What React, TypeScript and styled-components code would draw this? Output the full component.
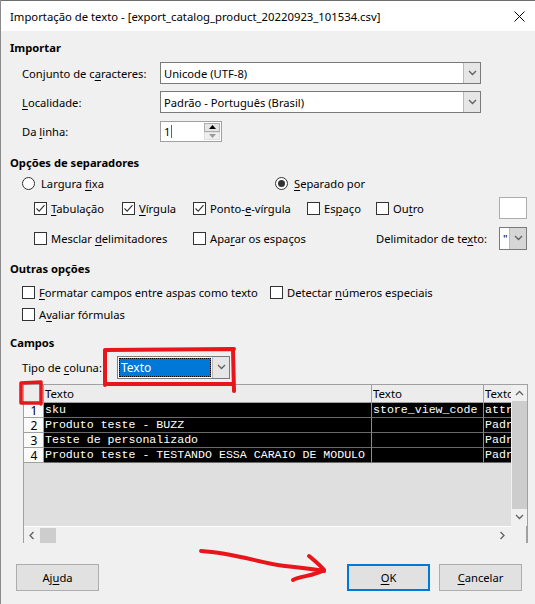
import React from 'react';
import styled, { createGlobalStyle } from 'styled-components';

const UI = `"Noto Sans", "Segoe UI", sans-serif`;
const MONO = `"Liberation Mono", "DejaVu Sans Mono", monospace`;
const FS = '11.2px';

const Global = createGlobalStyle`
  html, body { margin: 0; padding: 0; background: #f0f0f0; }
  body { font-family: ${UI}; font-size: ${FS}; color: #000; }
  * { box-sizing: border-box; }
`;

const Window = styled.div`
  position: relative;
  width: 535px;
  height: 604px;
  background: #f0f0f0;
  display: flex;
  flex-direction: column;
  overflow: hidden;
  border-left: 1px solid #8a8a8a;
`;

const TitleBar = styled.div`
  height: 31px;
  flex: none;
  background: #fff;
  border-top: 1px solid #6e6e6e;
  display: flex;
  align-items: center;
  justify-content: space-between;
  padding: 0 10px 0 9px;
  font-size: 11.3px;
`;

const Body = styled.div`
  display: flex;
  flex-direction: column;
  padding-left: 9px;
`;

const Heading = styled.div<{ $mt: number }>`
  margin-top: ${(p) => p.$mt}px;
  height: 16px;
  line-height: 16px;
  font-weight: 700;
  font-size: ${FS};
`;

const FormRow = styled.div<{ $mt: number; $h: number }>`
  margin-top: ${(p) => p.$mt}px;
  height: ${(p) => p.$h}px;
  padding-left: 12px;
  display: grid;
  grid-template-columns: 138px auto;
  align-items: center;
`;

const OptRow = styled.div<{ $mt: number; $h: number; $cols: string; $pl: number }>`
  margin-top: ${(p) => p.$mt}px;
  height: ${(p) => p.$h}px;
  padding-left: ${(p) => p.$pl}px;
  display: grid;
  grid-template-columns: ${(p) => p.$cols};
  align-items: center;
`;

const Label = styled.span`
  white-space: nowrap;
`;

const U = styled.span`
  text-decoration: underline;
  text-underline-offset: 2px;
  text-decoration-thickness: 1px;
`;

const Combo = styled.div<{ $w: number; $h: number }>`
  width: ${(p) => p.$w}px;
  height: ${(p) => p.$h}px;
  background: #fff;
  border: 1px solid #7a7a7a;
  display: flex;
  align-items: stretch;
`;

const ComboText = styled.div`
  flex: 1;
  padding-left: 3px;
  display: flex;
  align-items: center;
  white-space: nowrap;
  overflow: hidden;
`;

const SelectedText = styled.div`
  flex: 1;
  margin: 1px;
  background: #0078d7;
  color: #fff;
  outline: 1px dotted #000;
  outline-offset: -1px;
  padding-left: 2px;
  display: flex;
  align-items: center;
  font-size: 12px;
`;

const DropBtn = styled.div<{ $bg?: string }>`
  width: 17px;
  flex: none;
  background: ${(p) => p.$bg || '#e6e6e6'};
  border-left: 1px solid #b9b9b9;
  display: flex;
  align-items: center;
  justify-content: center;
`;

const Spin = styled.div`
  width: 62px;
  height: 21px;
  background: #fff;
  border: 1px solid #a0a0a0;
  display: flex;
`;

const SpinText = styled.div`
  flex: 1;
  padding-left: 3px;
  display: flex;
  align-items: center;
`;

const Caret = styled.span`
  display: inline-block;
  width: 1px;
  height: 13px;
  background: #1e6fd0;
  margin-left: 1px;
`;

const SpinBtns = styled.div`
  width: 17px;
  display: flex;
  flex-direction: column;
  padding: 1px 1px 1px 0;
`;

const SpinBtn = styled.div<{ $up?: boolean }>`
  flex: 1;
  background: ${(p) => (p.$up ? '#e5e5e5' : '#efefef')};
  border: 1px solid ${(p) => (p.$up ? '#adadad' : '#e0e0e0')};
  display: flex;
  align-items: center;
  justify-content: center;
`;

const TextBox = styled.div`
  width: 28px;
  height: 22px;
  background: #fff;
  border: 1px solid #adadad;
`;

const Choice = styled.label`
  display: flex;
  align-items: center;
  gap: 4px;
  white-space: nowrap;
`;

const Box = styled.span`
  width: 13px;
  height: 13px;
  flex: none;
  background: #fff;
  border: 1px solid #333;
  display: flex;
  align-items: center;
  justify-content: center;
`;

const Radio = styled.span`
  width: 13px;
  height: 13px;
  flex: none;
  border-radius: 50%;
  background: #fff;
  border: 1px solid #333;
  display: flex;
  align-items: center;
  justify-content: center;
  margin-right: 2px;
`;

const Dot = styled.span`
  width: 7px;
  height: 7px;
  border-radius: 50%;
  background: #333;
`;

const Span = styled.div<{ $col: string }>`
  grid-column: ${(p) => p.$col};
`;

const GridFrame = styled.div`
  margin-top: 5px;
  margin-left: 13px;
  width: 505px;
  height: 159px;
  border: 1px solid #a0a0a0;
  border-bottom: none;
  display: grid;
  grid-template-columns: 487px 16px;
  grid-template-rows: 141px 17px;
  background: #f0f0f0;
`;

const DataArea = styled.div`
  background: #dfdfdf;
  overflow: hidden;
`;

const TRow = styled.div<{ $h: number }>`
  display: grid;
  grid-template-columns: 20px 328px 112px 60px;
  height: ${(p) => p.$h}px;
`;

const HeadCell = styled.div`
  background: #ececec;
  border-right: 1px solid #a0a0a0;
  border-bottom: 1px solid #a0a0a0;
  padding-left: 1px;
  line-height: 17px;
  font-size: 11.5px;
  white-space: nowrap;
  overflow: hidden;
`;

const NumCell = styled.div`
  background: #fbfbfb;
  border-right: 1px solid #a0a0a0;
  border-bottom: 1px solid #a0a0a0;
  text-align: center;
  font-size: 12px;
  line-height: 12px;
  padding: 2px 0 0 1px;
  overflow: hidden;
`;

const DataCell = styled.div`
  background: #000;
  color: #fff;
  border-right: 1px solid #8c8c8c;
  border-bottom: 1px solid #6a6a6a;
  font-family: ${MONO};
  font-size: 11.6px;
  line-height: 13px;
  padding-left: 1px;
  white-space: nowrap;
  overflow: hidden;
`;

const VScroll = styled.div`
  grid-row: 1 / 2;
  grid-column: 2 / 3;
  background: #f0f0f0;
  display: flex;
  flex-direction: column;
  align-items: center;
`;

const ArrowCell = styled.div<{ $h: number; $w?: number }>`
  height: ${(p) => p.$h}px;
  width: ${(p) => (p.$w ? `${p.$w}px` : '100%')};
  display: flex;
  align-items: center;
  justify-content: center;
  flex: none;
`;

const VThumb = styled.div`
  width: 15px;
  flex: 1;
  background: #cdcdcd;
`;

const HScroll = styled.div`
  background: #f0f0f0;
  border-top: 1px solid #fff;
  display: flex;
  align-items: center;
`;

const HThumb = styled.div`
  width: 16px;
  height: 15px;
  background: #cdcdcd;
`;

const Corner = styled.div`
  background: #f0f0f0;
  border-right: 1px solid #a0a0a0;
`;

const ButtonRow = styled.div`
  margin-top: 21px;
  display: flex;
  align-items: center;
  padding: 0 13px 0 6px;
`;

const Button = styled.div<{ $primary?: boolean }>`
  width: 83px;
  height: 27px;
  background: #e1e1e1;
  border: ${(p) => (p.$primary ? '2px solid #0078d7' : '1px solid #adadad')};
  display: flex;
  align-items: center;
  justify-content: center;
  font-size: ${FS};
`;

const Spacer = styled.div`
  flex: 1;
`;

const Gap = styled.div<{ $w: number }>`
  width: ${(p) => p.$w}px;
`;

const Overlay = styled.svg`
  position: absolute;
  left: -1px;
  top: 0;
  pointer-events: none;
`;

const Chevron = ({ dir = 'down', color = '#5f5f5f' }: { dir?: 'down' | 'up' | 'left' | 'right'; color?: string }) => {
  const paths: Record<string, string> = {
    down: 'M1 2 L4.5 5.5 L8 2',
    up: 'M1 6 L4.5 2.5 L8 6',
    left: 'M5.5 1 L2 4.5 L5.5 8',
    right: 'M2.5 1 L6 4.5 L2.5 8',
  };
  return (
    <svg width="9" height="9" viewBox="0 0 9 9">
      <path d={paths[dir]} fill="none" stroke={color} strokeWidth="1.3" />
    </svg>
  );
};

const Check = () => (
  <svg width="11" height="11" viewBox="0 0 11 11">
    <path d="M1.5 5.5 L4.2 8.2 L9.5 2.2" fill="none" stroke="#333" strokeWidth="1.1" />
  </svg>
);

const CheckBox = ({ checked, children }: { checked?: boolean; children: React.ReactNode }) => (
  <Choice>
    <Box>{checked && <Check />}</Box>
    <span>{children}</span>
  </Choice>
);

const rows = [
  ['1', 'sku', 'store_view_code', 'attribute'],
  ['2', 'Produto teste - BUZZ', '', 'Padrão'],
  ['3', 'Teste de personalizado', '', 'Padrão'],
  ['4', 'Produto teste - TESTANDO ESSA CARAIO DE MODULO', '', 'Padrão'],
];

export default function App() {
  return (
    <Window>
      <Global />
      <TitleBar>
        <span>Importação de texto - [export_catalog_product_20220923_101534.csv]</span>
        <svg width="11" height="11" viewBox="0 0 11 11">
          <path d="M0.5 0.5 L10.5 10.5 M10.5 0.5 L0.5 10.5" stroke="#000" strokeWidth="1" />
        </svg>
      </TitleBar>
      <Body>
        <Heading $mt={9}>Importar</Heading>
        <FormRow $mt={6} $h={22}>
          <Label>Conjunto de c<U>a</U>racteres:</Label>
          <Combo $w={321} $h={22}>
            <ComboText>Unicode (UTF-8)</ComboText>
            <DropBtn><Chevron /></DropBtn>
          </Combo>
        </FormRow>
        <FormRow $mt={7} $h={22}>
          <Label><U>L</U>ocalidade:</Label>
          <Combo $w={321} $h={22}>
            <ComboText>Padrão - Português (Brasil)</ComboText>
            <DropBtn><Chevron /></DropBtn>
          </Combo>
        </FormRow>
        <FormRow $mt={8} $h={21}>
          <Label>Da <U>l</U>inha:</Label>
          <Spin>
            <SpinText>1<Caret /></SpinText>
            <SpinBtns>
              <SpinBtn $up>
                <svg width="7" height="4" viewBox="0 0 7 4"><path d="M0 4 L3.5 0 L7 4 Z" fill="#000" /></svg>
              </SpinBtn>
              <SpinBtn>
                <svg width="7" height="4" viewBox="0 0 7 4"><path d="M0 0 L3.5 4 L7 0 Z" fill="#9a9a9a" /></svg>
              </SpinBtn>
            </SpinBtns>
          </Spin>
        </FormRow>

        <Heading $mt={13}>Opções de separadores</Heading>
        <OptRow $mt={3} $h={18} $pl={12} $cols="253px auto">
          <Choice><Radio /><span>Largura <U>f</U>ixa</span></Choice>
          <Choice><Radio><Dot /></Radio><span><U>S</U>eparado por</span></Choice>
        </OptRow>
        <OptRow $mt={5} $h={22} $pl={24} $cols="88px 71px 114px 69px 123px 28px">
          <CheckBox checked><U>T</U>abulação</CheckBox>
          <CheckBox checked><U>V</U>írgula</CheckBox>
          <CheckBox checked>Ponto-<U>e</U>-vírgula</CheckBox>
          <CheckBox>Es<U>p</U>aço</CheckBox>
          <CheckBox>Ou<U>t</U>ro</CheckBox>
          <TextBox />
        </OptRow>
        <OptRow $mt={8} $h={23} $pl={24} $cols="88px 71px 114px 69px 123px 28px">
          <Span $col="1 / 3"><CheckBox>Mesclar <U>d</U>elimitadores</CheckBox></Span>
          <Span $col="3 / 5"><CheckBox>Apa<U>r</U>ar os espaços</CheckBox></Span>
          <Label>Delimitador de te<U>x</U>to:</Label>
          <Combo $w={28} $h={23}>
            <ComboText>"</ComboText>
            <DropBtn $bg="#d6d6d6"><Chevron /></DropBtn>
          </Combo>
        </OptRow>

        <Heading $mt={11}>Outras opções</Heading>
        <OptRow $mt={6} $h={18} $pl={12} $cols="248px auto">
          <CheckBox><U>F</U>ormatar campos entre aspas como texto</CheckBox>
          <CheckBox>Detectar <U>n</U>úmeros especiais</CheckBox>
        </OptRow>
        <OptRow $mt={4} $h={18} $pl={12} $cols="248px auto">
          <CheckBox>A<U>v</U>aliar fórmulas</CheckBox>
        </OptRow>

        <Heading $mt={12}>Campos</Heading>
        <OptRow $mt={5} $h={23} $pl={12} $cols="95px auto">
          <Label>Tipo de <U>c</U>oluna:</Label>
          <Combo $w={113} $h={23}>
            <SelectedText>Texto</SelectedText>
            <DropBtn><Chevron /></DropBtn>
          </Combo>
        </OptRow>

        <GridFrame>
          <DataArea>
            <TRow $h={18}>
              <HeadCell />
              <HeadCell>Texto</HeadCell>
              <HeadCell>Texto</HeadCell>
              <HeadCell>Texto</HeadCell>
            </TRow>
            {rows.map((r) => (
              <TRow key={r[0]} $h={15}>
                <NumCell>{r[0]}</NumCell>
                <DataCell>{r[1]}</DataCell>
                <DataCell>{r[2]}</DataCell>
                <DataCell>{r[3]}</DataCell>
              </TRow>
            ))}
          </DataArea>
          <VScroll>
            <ArrowCell $h={16}><Chevron dir="up" color="#606060" /></ArrowCell>
            <VThumb />
            <ArrowCell $h={17}><Chevron dir="down" color="#606060" /></ArrowCell>
          </VScroll>
          <HScroll>
            <ArrowCell $h={15} $w={16}><Chevron dir="left" color="#606060" /></ArrowCell>
            <HThumb />
            <Spacer />
            <ArrowCell $h={15} $w={17}><Chevron dir="right" color="#606060" /></ArrowCell>
          </HScroll>
          <Corner />
        </GridFrame>

        <ButtonRow>
          <Button>Aj<U>u</U>da</Button>
          <Spacer />
          <Button $primary><U>O</U>K</Button>
          <Gap $w={9} />
          <Button><U>C</U>ancelar</Button>
        </ButtonRow>
      </Body>

      <Overlay width="535" height="604" viewBox="0 0 535 604">
        <g fill="none" stroke="#e8161b" strokeWidth="4" strokeLinecap="round" strokeLinejoin="round">
          <path d="M105 350 L234 349 M233 350 L234 391 M105 350 L105 385 M105 384 L233 384" />
          <path d="M21 383 L41 382 M21 383 L21 403 M21 403 L41 403 M41 382 L41 404" strokeWidth="3.5" />
          <path d="M201 551 C235 553 260 563 285 566 S 315 569 324 571" />
          <path d="M309 556 C316 562 321 566 324 570 C314 576 300 576 293 580" />
        </g>
      </Overlay>
    </Window>
  );
}
